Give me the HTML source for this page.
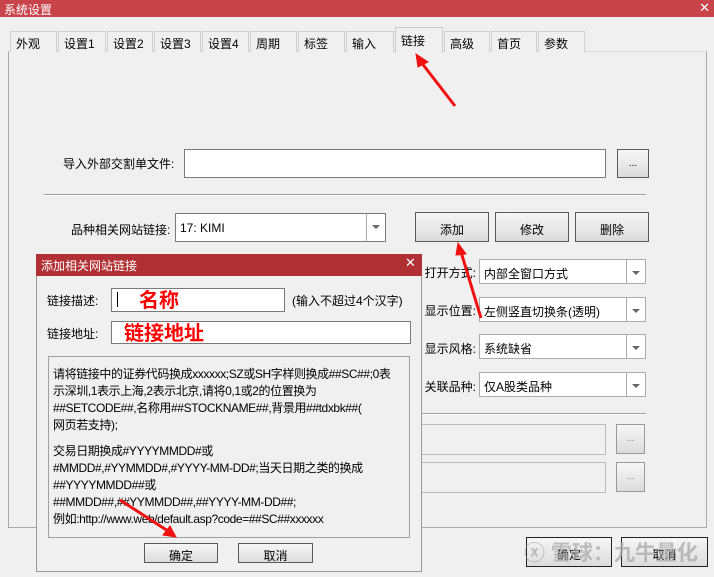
<!DOCTYPE html>
<html><head><meta charset="utf-8"><style>
*{box-sizing:border-box;margin:0;padding:0}
body{width:714px;height:577px;background:#f0f0f0;font-family:"Liberation Sans","Noto Sans CJK SC",sans-serif;font-size:12px;color:#000;position:relative;overflow:hidden}
.a{position:absolute}
.tb{background:#c8434a;color:#fff}
.tab{position:absolute;top:31px;height:21px;border:1px solid #d0d0d0;border-bottom:none;background:#f0f0f0;padding:3px 0 0 5px;font-size:12px}
.in{position:absolute;background:#fff;border:1px solid #7a7a7a}
.btn{position:absolute;background:linear-gradient(#f6f6f6,#dcdcdc);border:1px solid #5a5a5a;text-align:center;font-size:12px}
.cb{position:absolute;background:#fff;border:1px solid #acacac;padding:5px 0 0 4px;font-size:12px}
.cb:after{content:"";position:absolute;right:0;top:0;width:18px;height:100%;border-left:1px solid #acacac}
.cb:before{content:"";position:absolute;right:5px;top:11px;border:4px solid transparent;border-top:4px solid #666;z-index:2}
.lbl{position:absolute;font-size:12px;white-space:nowrap}
.sep{position:absolute;height:2px;border-top:1px solid #a0a0a0;border-bottom:1px solid #fff}
</style></head><body>
<div class="a tb" style="left:0;top:0;width:714px;height:17px;padding:1px 0 0 4px;font-size:12px">系统设置</div>
<div class="a" style="right:4px;top:0;color:#fff;font-size:13px">✕</div>
<div class="a" style="left:8px;top:51px;width:699px;height:477px;border:1px solid #aaa;border-top-color:#ddd;background:#f0f0f0"></div>
<div class="tab" style="left:10px;width:47px">外观</div>
<div class="tab" style="left:58px;width:48px">设置1</div>
<div class="tab" style="left:107px;width:46px">设置2</div>
<div class="tab" style="left:154px;width:47px">设置3</div>
<div class="tab" style="left:202px;width:47px">设置4</div>
<div class="tab" style="left:250px;width:47px">周期</div>
<div class="tab" style="left:298px;width:47px">标签</div>
<div class="tab" style="left:346px;width:48px">输入</div>
<div class="tab" style="left:395px;top:27px;width:48px;height:26px;background:#f0f0f0;border-color:#ccc;z-index:2;padding-top:4px">链接</div>
<div class="tab" style="left:444px;width:46px">高级</div>
<div class="tab" style="left:491px;width:46px">首页</div>
<div class="tab" style="left:538px;width:47px">参数</div>

<div class="lbl" style="left:63px;top:155px">导入外部交割单文件:</div>
<div class="in" style="left:184px;top:149px;width:422px;height:29px"></div>
<div class="btn" style="left:617px;top:149px;width:32px;height:29px;padding-top:8px;font-size:10px">...</div>
<div class="sep" style="left:44px;top:194px;width:602px"></div>
<div class="lbl" style="left:71px;top:221px">品种相关网站链接:</div>
<div class="cb" style="left:175px;top:213px;width:211px;height:29px;padding-top:7px;border-color:#7a7a7a">17: KIMI</div>
<div class="btn" style="left:415px;top:212px;width:74px;height:30px;padding-top:8px">添加</div>
<div class="btn" style="left:495px;top:212px;width:74px;height:30px;padding-top:8px">修改</div>
<div class="btn" style="left:575px;top:212px;width:74px;height:30px;padding-top:8px">删除</div>

<div class="lbl" style="left:410px;width:66px;text-align:right;top:264px">打开方式:</div>
<div class="lbl" style="left:410px;width:66px;text-align:right;top:302px">显示位置:</div>
<div class="lbl" style="left:410px;width:66px;text-align:right;top:340px">显示风格:</div>
<div class="lbl" style="left:410px;width:66px;text-align:right;top:378px">关联品种:</div>
<div class="cb" style="left:479px;top:259px;width:167px;height:25px">内部全窗口方式</div>
<div class="cb" style="left:479px;top:297px;width:167px;height:25px">左侧竖直切换条(透明)</div>
<div class="cb" style="left:479px;top:334px;width:167px;height:25px">系统缺省</div>
<div class="cb" style="left:479px;top:372px;width:167px;height:25px">仅A股类品种</div>
<div class="sep" style="left:421px;top:413px;width:225px"></div>
<div class="a" style="left:421px;top:424px;width:185px;height:31px;border:1px solid #bbb;background:#f0f0f0"></div>
<div class="a" style="left:421px;top:462px;width:185px;height:31px;border:1px solid #bbb;background:#f0f0f0"></div>
<div class="btn" style="left:616px;top:424px;width:29px;height:30px;padding-top:8px;font-size:9px;color:#777;border-color:#999">...</div>
<div class="btn" style="left:616px;top:462px;width:29px;height:30px;padding-top:8px;font-size:9px;color:#777;border-color:#999">...</div>
<div class="btn" style="left:526px;top:537px;width:86px;height:30px;padding-top:8px;border-color:#222">确定</div>
<div class="btn" style="left:621px;top:537px;width:87px;height:30px;padding-top:8px;border-color:#222">取消</div>
<div class="a" style="left:524px;top:537px;font-size:21px;color:rgba(170,170,170,0.75);font-weight:bold;white-space:nowrap">ⓧ 雪球：九牛量化</div>

<!-- dialog -->
<div class="a" style="left:36px;top:254px;width:386px;height:318px;background:#f0f0f0;border:1px solid #999"></div>
<div class="a" style="left:36px;top:254px;width:386px;height:22px;background:#b03034;color:#fff;padding:3px 0 0 5px;font-size:12px">添加相关网站链接</div>
<div class="a" style="left:405px;top:255px;color:#fff;font-size:13px">✕</div>
<div class="lbl" style="left:47px;top:292px">链接描述:</div>
<div class="in" style="left:111px;top:288px;width:174px;height:24px"></div>
<div class="a" style="left:117px;top:292px;width:1px;height:15px;background:#000"></div>
<div class="a" style="left:139px;top:284px;font-size:20px;font-weight:bold;color:#f00">名称</div>
<div class="lbl" style="left:292px;top:292px">(输入不超过4个汉字)</div>
<div class="lbl" style="left:47px;top:325px">链接地址:</div>
<div class="in" style="left:111px;top:321px;width:300px;height:23px"></div>
<div class="a" style="left:124px;top:317px;font-size:20px;font-weight:bold;color:#f00">链接地址</div>
<div class="a" style="left:48px;top:356px;width:362px;height:182px;border:1px solid #a0a0a0;padding:9px 0 0 4px;line-height:17px;font-size:12px;white-space:nowrap;letter-spacing:-0.4px">请将链接中的证券代码换成xxxxxx;SZ或SH字样则换成##SC##;0表<br>示深圳,1表示上海,2表示北京,请将0,1或2的位置换为<br>##SETCODE##,名称用##STOCKNAME##,背景用##tdxbk##(<br>网页若支持);<div style="height:9px"></div>交易日期换成#YYYYMMDD#或<br>#MMDD#,#YYMMDD#,#YYYY-MM-DD#;当天日期之类的换成<br>##YYYYMMDD##或<br>##MMDD##,##YYMMDD##,##YYYY-MM-DD##;<br>例如:http://www.web/default.asp?code=##SC##xxxxxx</div>
<div class="btn" style="left:144px;top:543px;width:74px;height:20px;padding-top:3px">确定</div>
<div class="btn" style="left:238px;top:543px;width:75px;height:20px;padding-top:3px">取消</div>

<svg class="a" style="left:0;top:0" width="714" height="577">
<g stroke="#f01010" stroke-width="3" fill="#f01010">
<line x1="455" y1="106" x2="421" y2="62"/><polygon points="416,54 428,62 418,67" stroke-width="1"/>
<line x1="481" y1="318" x2="461" y2="252"/><polygon points="458,243 466,254 456,255" stroke-width="1"/>
<line x1="120" y1="500" x2="168" y2="531"/><polygon points="176,537 163,535 170,526" stroke-width="1"/>
</g></svg>
</body></html>
